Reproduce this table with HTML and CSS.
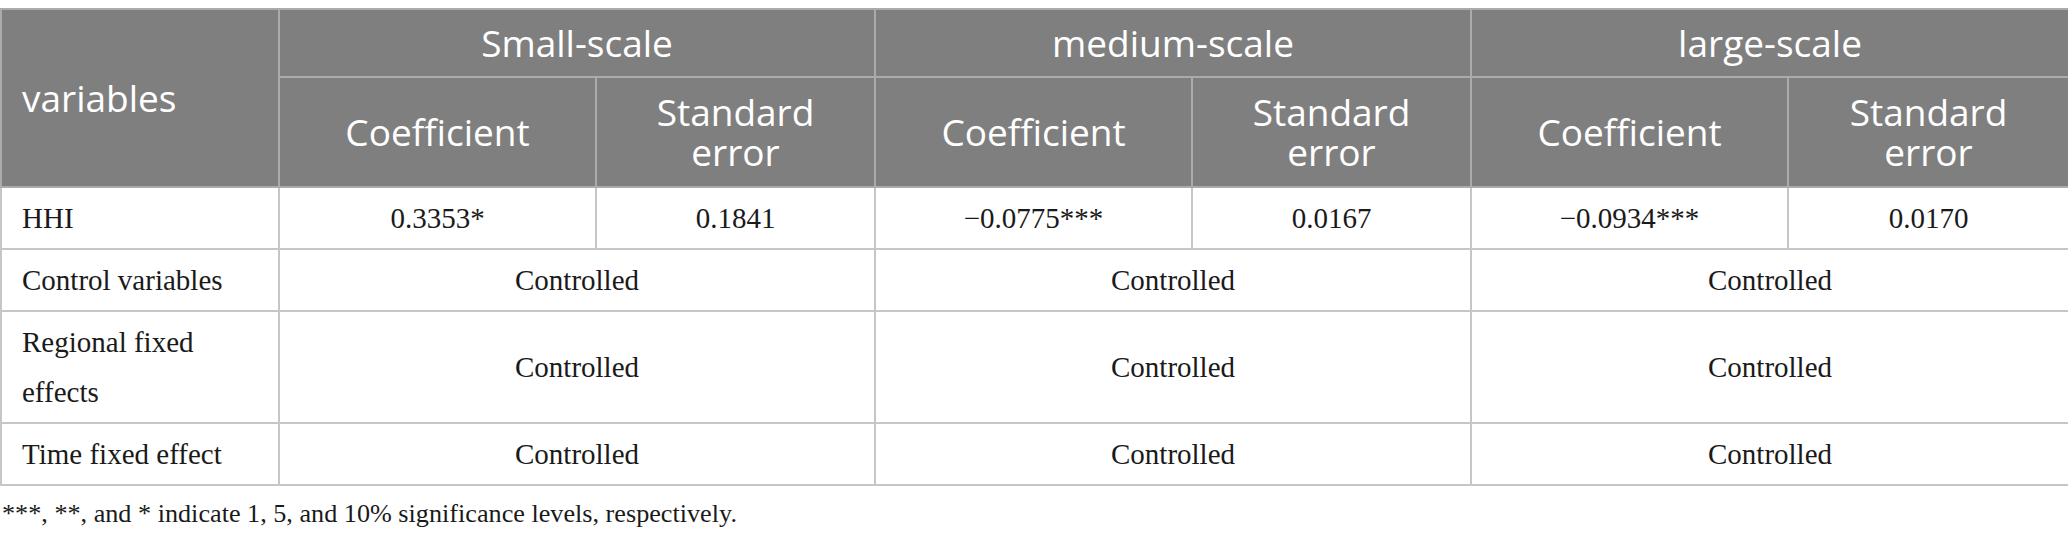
FILE: index.html
```html
<!DOCTYPE html>
<html lang="en">
<head>
<meta charset="utf-8">
<title>Table</title>
<link rel="stylesheet" href="styles.css">
</head>
<body>
<div class="wrap">
<table class="data">
  <colgroup>
    <col class="c-var">
    <col class="c-coef">
    <col class="c-se">
    <col class="c-coef">
    <col class="c-se">
    <col class="c-coef">
    <col class="c-se-last">
  </colgroup>
  <thead>
    <tr class="h1">
      <th rowspan="2" class="left">variables</th>
      <th colspan="2">Small-scale</th>
      <th colspan="2">medium-scale</th>
      <th colspan="2">large-scale</th>
    </tr>
    <tr class="h2">
      <th>Coefficient</th>
      <th>Standard<br>error</th>
      <th>Coefficient</th>
      <th>Standard<br>error</th>
      <th>Coefficient</th>
      <th>Standard<br>error</th>
    </tr>
  </thead>
  <tbody>
    <tr>
      <td class="left">HHI</td>
      <td>0.3353*</td>
      <td>0.1841</td>
      <td>−0.0775***</td>
      <td>0.0167</td>
      <td>−0.0934***</td>
      <td>0.0170</td>
    </tr>
    <tr>
      <td class="left">Control variables</td>
      <td colspan="2">Controlled</td>
      <td colspan="2">Controlled</td>
      <td colspan="2">Controlled</td>
    </tr>
    <tr>
      <td class="left">Regional fixed effects</td>
      <td colspan="2">Controlled</td>
      <td colspan="2">Controlled</td>
      <td colspan="2">Controlled</td>
    </tr>
    <tr>
      <td class="left">Time fixed effect</td>
      <td colspan="2">Controlled</td>
      <td colspan="2">Controlled</td>
      <td colspan="2">Controlled</td>
    </tr>
  </tbody>
</table>
<p class="note">***, **, and * indicate 1, 5, and 10% significance levels, respectively.</p>
</div>
</body>
</html>
```

FILE: styles.css
```css
html, body {
  margin: 0;
  padding: 0;
  background: #ffffff;
}

.wrap {
  padding-top: 8px;
}

.data {
  width: 2068px;
  border-collapse: collapse;
  table-layout: fixed;
}

.c-var { width: 278px; }
.c-coef { width: 317px; }
.c-se { width: 279px; }
.c-se-last { width: 281px; }

.data th,
.data td {
  border: 2px solid #c6c6c6;
}

.data th {
  background: #7f7f7f;
  color: #ffffff;
  font-family: "Open Sans", "Noto Sans", sans-serif;
  font-weight: 400;
  font-size: 37px;
  line-height: 40px;
  text-align: center;
  vertical-align: middle;
  border-color: #ababab;
}

.data tr.h1 th {
  padding: 13px 20px;
}

.data tr.h2 th {
  padding: 14px 20px;
}

.data th.left {
  text-align: left;
  padding-left: 20px;
}

.data td {
  font-family: "Liberation Serif", "Times New Roman", serif;
  font-size: 29px;
  line-height: 50px;
  color: #1a1a1a;
  text-align: center;
  vertical-align: middle;
  padding: 5px 20px;
}

.data td.left {
  text-align: left;
}

.note {
  margin: 10px 0 0 2px;
  font-family: "Liberation Serif", "Times New Roman", serif;
  font-size: 26.2px;
  line-height: 36px;
  color: #1a1a1a;
}
```
